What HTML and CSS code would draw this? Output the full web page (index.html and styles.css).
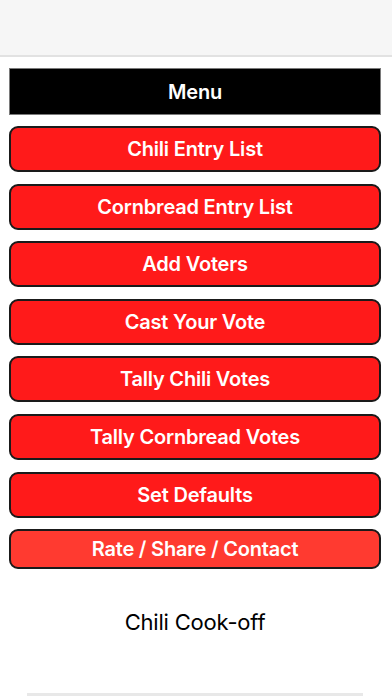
FILE: index.html
```html
<!DOCTYPE html>
<html>
<head>
<meta charset="utf-8">
<link rel="stylesheet" href="styles.css">
</head>
<body>
<div class="topbar"></div>
<main class="content">
  <div class="menu-title">Menu</div>
  <nav class="buttons">
    <div class="btn">Chili Entry List</div>
    <div class="btn">Cornbread Entry List</div>
    <div class="btn">Add Voters</div>
    <div class="btn">Cast Your Vote</div>
    <div class="btn">Tally Chili Votes</div>
    <div class="btn">Tally Cornbread Votes</div>
    <div class="btn">Set Defaults</div>
    <div class="btn btn-rate">Rate / Share / Contact</div>
  </nav>
  <div class="app-name">Chili Cook-off</div>
</main>
<div class="bottom-line"></div>
</body>
</html>
```

FILE: styles.css
```css
html, body {
  margin: 0;
  padding: 0;
  background: #ffffff;
  font-family: Inter, "Noto Sans", Roboto, sans-serif;
  width: 392px;
  height: 696px;
  overflow: hidden;
}
.topbar {
  height: 55px;
  background: #f6f6f6;
  border-bottom: 2px solid #e2e2e2;
}
.content {
  padding: 11px 11px 0 9px;
}
.menu-title {
  height: 45px;
  background: #000;
  border: 1px solid #7a7a7a;
  color: #fff;
  font-weight: 600;
  font-size: 20px;
  display: flex;
  align-items: center;
  justify-content: center;
  letter-spacing: -0.2px;
}
.buttons {
  display: flex;
  flex-direction: column;
  gap: 11.6px;
  margin-top: 11px;
}
.btn {
  height: 42px;
  box-sizing: content-box;
  background: #ff1a1a;
  border: 2px solid #1a1a1a;
  border-radius: 9px;
  color: #fff;
  font-weight: 600;
  font-size: 20px;
  display: flex;
  align-items: center;
  justify-content: center;
  letter-spacing: -0.2px;
}
.btn-rate {
  height: 36px;
  background: #ff3a30;
}
.app-name {
  text-align: center;
  font-size: 22px;
  color: #000;
  margin-top: 40px;
  letter-spacing: -0.2px;
}
.bottom-line {
  position: absolute;
  left: 27px;
  width: 336px;
  top: 693px;
  height: 3px;
  background: #e8e8e8;
}
```
